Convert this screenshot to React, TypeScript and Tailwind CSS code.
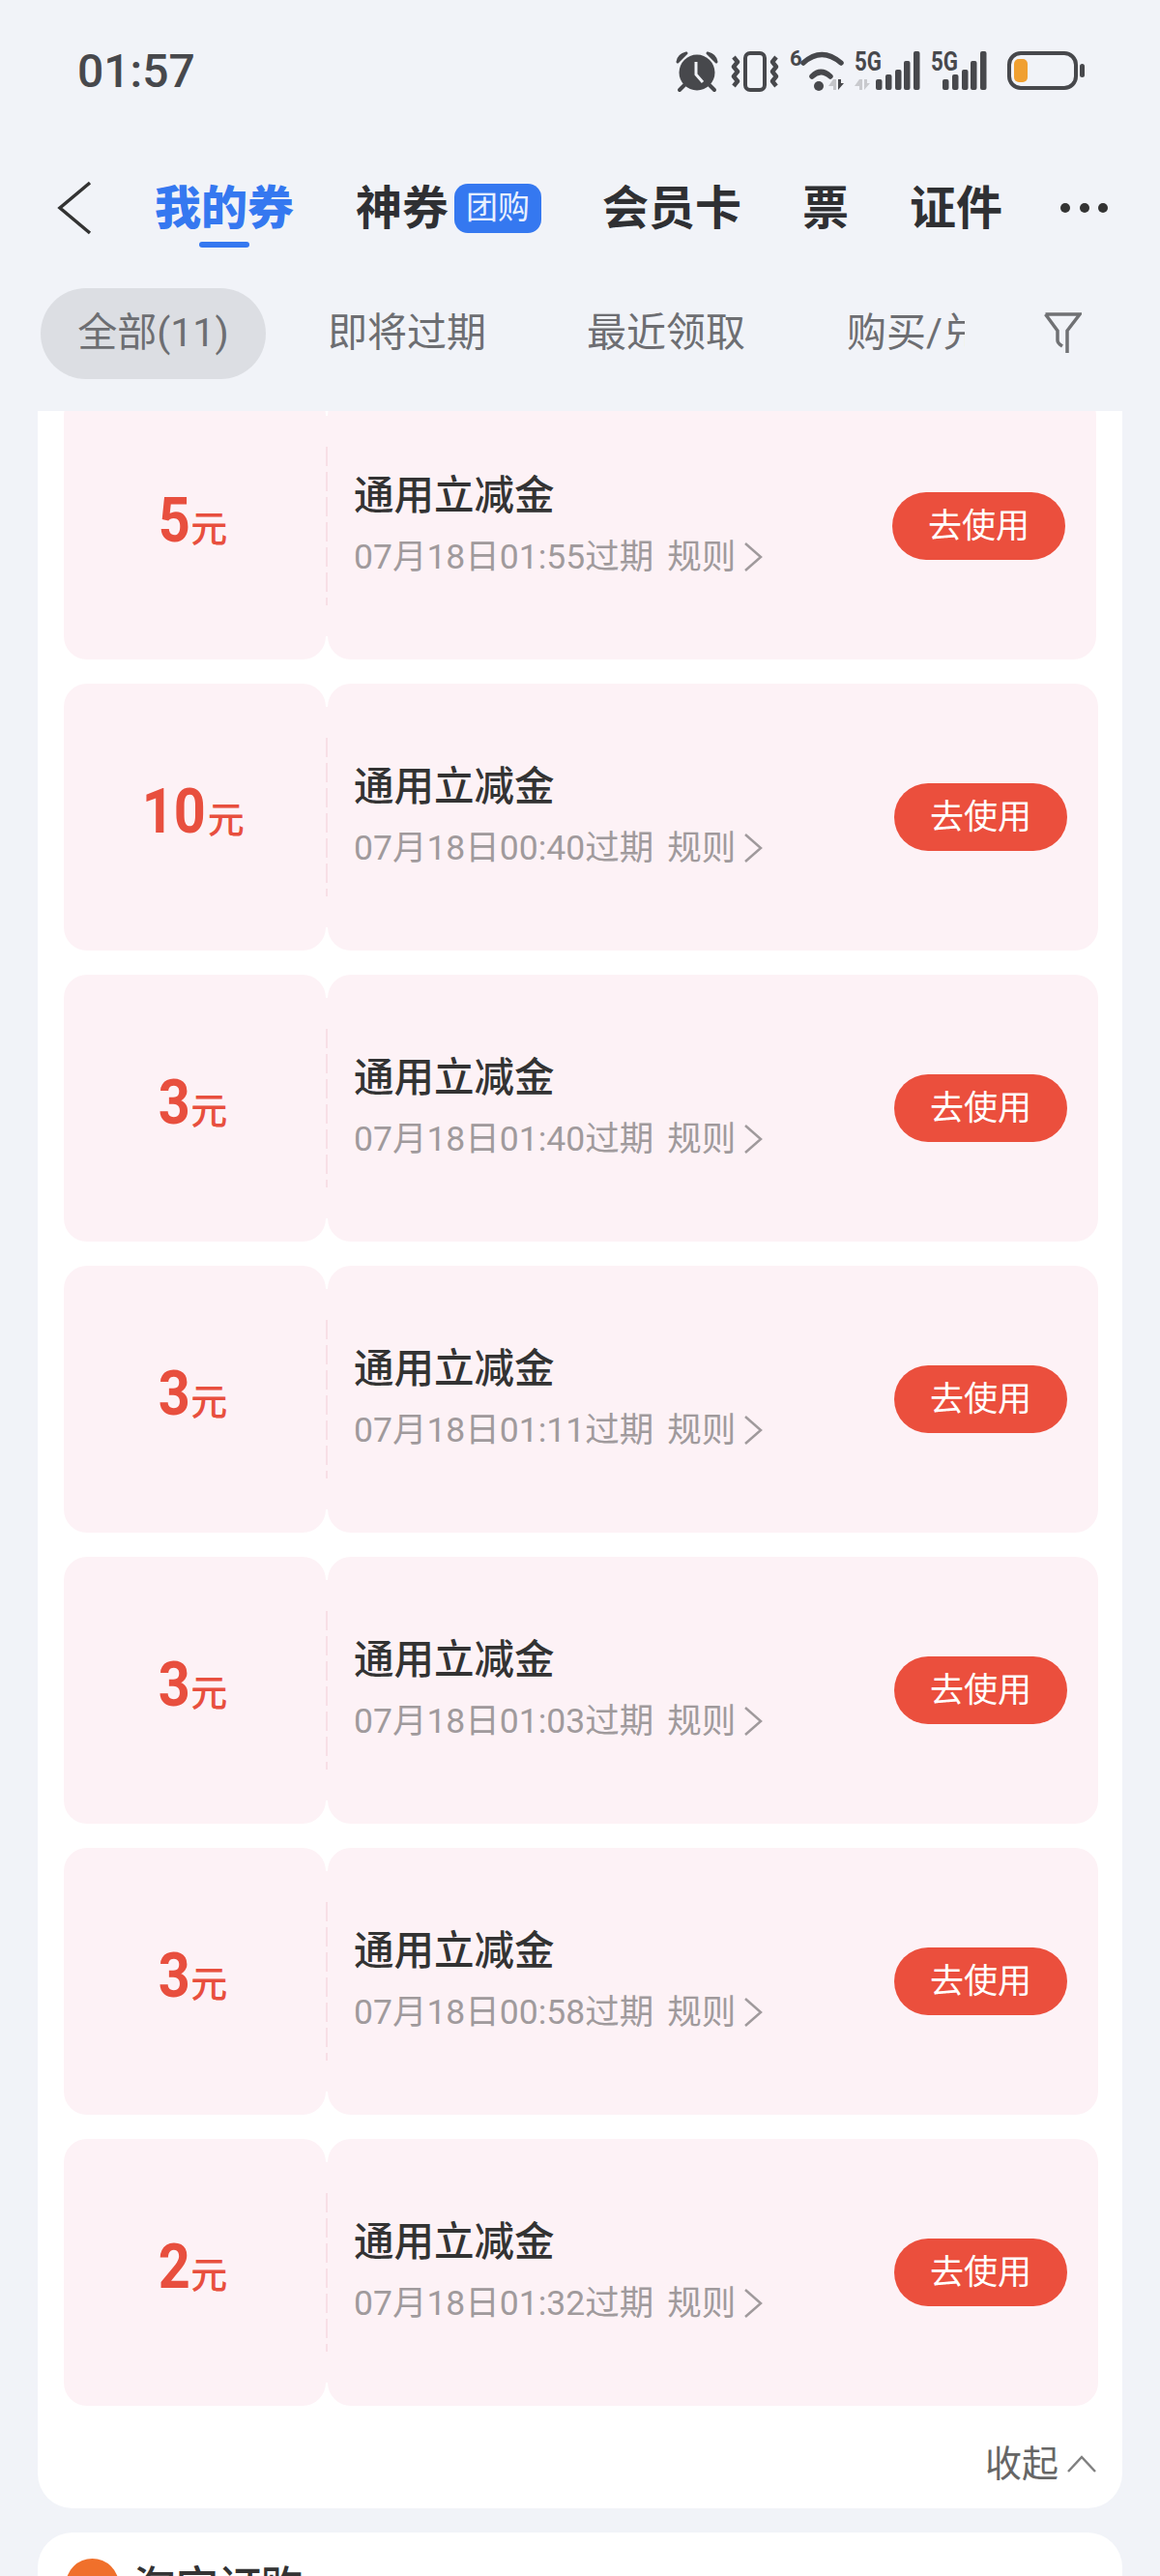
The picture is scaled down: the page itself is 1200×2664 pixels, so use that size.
import type React from "react";

interface Coupon {
  amount: string;
  expires: string;
}

const coupons: Coupon[] = [
  { amount: "5", expires: "07月18日01:55过期" },
  { amount: "10", expires: "07月18日00:40过期" },
  { amount: "3", expires: "07月18日01:40过期" },
  { amount: "3", expires: "07月18日01:11过期" },
  { amount: "3", expires: "07月18日01:03过期" },
  { amount: "3", expires: "07月18日00:58过期" },
  { amount: "2", expires: "07月18日01:32过期" },
];

const signalBars = (x: number) => (
  <g fill="#47484c">
    <rect x={x} y={32} width={6.5} height={11} rx={2} />
    <rect x={x + 10} y={27} width={6.5} height={16} rx={2} />
    <rect x={x + 20} y={22} width={6.5} height={21} rx={2} />
    <rect x={x + 29} y={13} width={6.5} height={30} rx={2} />
    <rect x={x + 39} y={3} width={6.5} height={40} rx={2} />
  </g>
);

const StatusIcons: React.FC = () => (
  <svg width={430} height={48} viewBox="0 0 430 48" fill="none">
    {/* alarm */}
    <circle cx={26} cy={25} r={18.5} fill="#47484c" />
    <path d="M6 14 Q7 7 15 5 Z M46 14 Q45 7 37 5 Z" fill="#47484c" stroke="#47484c" strokeWidth={3} strokeLinejoin="round" />
    <path d="M13 38 L8 43 M39 38 L44 43" stroke="#47484c" strokeWidth={4} strokeLinecap="round" />
    <path d="M25 14 V27 L32 35" stroke="#f1f3f8" strokeWidth={3} />
    {/* vibrate */}
    <rect x={76} y={5} width={20} height={38} rx={5} stroke="#47484c" strokeWidth={4} />
    <path d="M64 9 L68 14 L64 19 L68 24 L64 29 L68 34 L64 39" stroke="#47484c" strokeWidth={4.5} strokeLinejoin="round" />
    <path d="M108 9 L104 14 L108 19 L104 24 L108 29 L104 34 L108 39" stroke="#47484c" strokeWidth={4.5} strokeLinejoin="round" />
    {/* wifi */}
    <text x={122} y={18} fontSize={22} fontWeight={700} fill="#47484c" fontFamily="Roboto">6</text>
    <path d="M136 15 Q155 -2 175 15" stroke="#47484c" strokeWidth={5.5} strokeLinecap="round" />
    <path d="M145 29 Q154 20 164 29" stroke="#47484c" strokeWidth={5.5} strokeLinecap="round" />
    <circle cx={152} cy={39} r={5} fill="#47484c" />
    <path d="M167 32 V43 H170 V32 Z M167 32 L162 39 H167 Z" fill="#c4c5c9" />
    <path d="M172 32 V43 L178 36 H175 V32 Z" fill="#47484c" />
    {/* 5G, first sim */}
    <text x={189} y={23} fontSize={27} fontWeight={700} fill="#47484c" fontFamily="Roboto" textLength={28} lengthAdjust="spacingAndGlyphs">5G</text>
    <path d="M194 32 V43 H197 V32 Z M194 32 L189 39 H194 Z" fill="#c9cace" />
    <path d="M199 32 V43 L205 36 H202 V32 Z" fill="#c9cace" />
    {signalBars(211)}
    {/* 5G, second sim */}
    <text x={268} y={23} fontSize={27} fontWeight={700} fill="#47484c" fontFamily="Roboto" textLength={28} lengthAdjust="spacingAndGlyphs">5G</text>
    {signalBars(280)}
    {/* battery */}
    <rect x={349} y={5} width={69} height={36} rx={12} stroke="#47484c" strokeWidth={4} />
    <rect x={354} y={11} width={14} height={24} rx={5} fill="#f0a030" />
    <rect x={422} y={16} width={5} height={14} rx={2.5} fill="#47484c" />
  </svg>
);

const CouponRow: React.FC<{ coupon: Coupon; shifted: boolean }> = ({ coupon, shifted }) => {
  return (
    <div className={shifted ? "flex h-[276px] mr-[2px]" : "flex h-[276px]"}>
      <div className="flex w-[271px] items-baseline justify-center rounded-[24px] bg-[#fdf2f6] pt-[93px] pr-[4px] text-[#e84f3e]">
        <span
          className={
            coupon.amount.length > 1
              ? "inline-block -mx-[3px] scale-x-[0.9] text-[64px] leading-[80px] font-bold"
              : "inline-block -mx-[2px] scale-x-[0.9] text-[64px] leading-[80px] font-bold"
          }
        >
          {coupon.amount}
        </span>
        <span className="ml-[1px] text-[38px] font-medium">元</span>
      </div>
      <div className="my-[24px] w-[2px] bg-[#fdf2f6] py-[32px]">
        <div className="h-full w-full bg-[repeating-linear-gradient(to_bottom,#f8dfe6_0px,#f8dfe6_20px,transparent_20px,transparent_26px)]" />
      </div>
      <div className="flex flex-1 items-center justify-between rounded-[24px] bg-[#fdf2f6] pr-[32px] pl-[27px]">
        <div>
          <p className="text-[41.5px] leading-[50px] font-medium text-[#333333]">通用立减金</p>
          <p className="mt-[13px] flex items-center text-[35.5px] leading-[50px] text-[#a09a9c]">
            {coupon.expires}
            <span className="ml-[14px]">规则</span>
            <svg className="ml-[8px]" width={20} height={34} viewBox="0 0 20 34" fill="none">
              <path d="M2 3 L18 17 L2 31" stroke="#a09a9c" strokeWidth={2.5} />
            </svg>
          </p>
        </div>
        <button className="h-[70px] w-[179px] rounded-full bg-[#eb4f3d] pt-[2px] text-[35px] text-white">去使用</button>
      </div>
    </div>
  );
};

export default function App() {
  return (
    <div className="h-[2664px] w-[1200px] overflow-hidden bg-[#f1f3f8] pt-[50px] font-['Roboto','Noto_Sans_CJK_SC',sans-serif]">
      <div className="flex h-[48px] items-center justify-between pr-[75px] pl-[80px]">
        <span className="text-[48px] font-medium text-[#47484c]">01:57</span>
        <StatusIcons />
      </div>

      <div className="mt-[87px] flex h-[60px] items-center pl-[59px] text-[48px] leading-[60px] font-bold text-[#2f3033]">
        <svg width={36} height={56} viewBox="0 0 36 56" fill="none">
          <path d="M34 2 L3 28 L34 54" stroke="#333333" strokeWidth={3.5} />
        </svg>
        <span className="relative ml-[65px] pt-[2px] font-black text-[#3578f0]">
          我的券
          <span className="absolute top-[66px] left-[46px] h-[6px] w-[52px] rounded-full bg-[#3578f0]" />
        </span>
        <span className="ml-[64px] pt-[2px]">神券</span>
        <span className="ml-[6px] flex h-[51px] w-[90px] items-center justify-center rounded-[14px] bg-[#3578f0] text-[33px] font-normal text-[#e8f0fe]">
          团购
        </span>
        <span className="ml-[63px] pt-[2px]">会员卡</span>
        <span className="ml-[63px] pt-[2px]">票</span>
        <span className="ml-[63px] pt-[2px]">证件</span>
        <span className="ml-[60px] flex gap-[9.5px]">
          <span className="h-[10px] w-[10px] rounded-full bg-[#333333]" />
          <span className="h-[10px] w-[10px] rounded-full bg-[#333333]" />
          <span className="h-[10px] w-[10px] rounded-full bg-[#333333]" />
        </span>
      </div>

      <div className="mt-[53px] flex h-[94px] items-center pl-[42px] text-[41px] text-[#6d6e72]">
        <span className="flex h-[94px] w-[233px] items-center justify-center rounded-full bg-[#dcdee3]">全部(11)</span>
        <span className="ml-[64px] w-[168px] whitespace-nowrap">即将过期</span>
        <span className="ml-[100px] w-[168px] whitespace-nowrap">最近领取</span>
        <span className="ml-[101px] w-[122px] overflow-hidden whitespace-nowrap">购买/兑换</span>
        <svg className="ml-[81px]" width={40} height={46} viewBox="0 0 40 46" fill="none">
          <path d="M2.5 3 H38 L25 20 V43 M2.5 3 L15 20 V30 Q15 33 20 36" stroke="#707174" strokeWidth={3.5} />
        </svg>
      </div>

      <div className="mt-[33px] h-[2239px] overflow-hidden px-[39px]">
        <div className="rounded-b-[36px] bg-white pr-[25px] pl-[27px]">
          <div className="-mt-[19px] flex flex-col gap-[25px]">
            {coupons.map((coupon, i) => (
              <CouponRow key={i} coupon={coupon} shifted={i === 0} />
            ))}
          </div>
          <div className="flex h-[106px] items-center justify-end gap-[8px] pt-[14px] pr-[1px] text-[38px] text-[#666666]">
            收起
            <svg width={32} height={20} viewBox="0 0 32 20" fill="none">
              <path d="M2 18 L16 3 L30 18" stroke="#808080" strokeWidth={2.5} />
            </svg>
          </div>
        </div>

        <div className="mt-[25px] flex h-[120px] items-start gap-[15px] rounded-t-[36px] bg-white pt-[27px] pl-[29px]">
          <span className="h-[55px] w-[55px] rounded-full bg-[#f0702b]" />
          <span className="text-[44px] leading-[60px] font-medium text-[#333333]">淘宝订购</span>
        </div>
      </div>
    </div>
  );
}
